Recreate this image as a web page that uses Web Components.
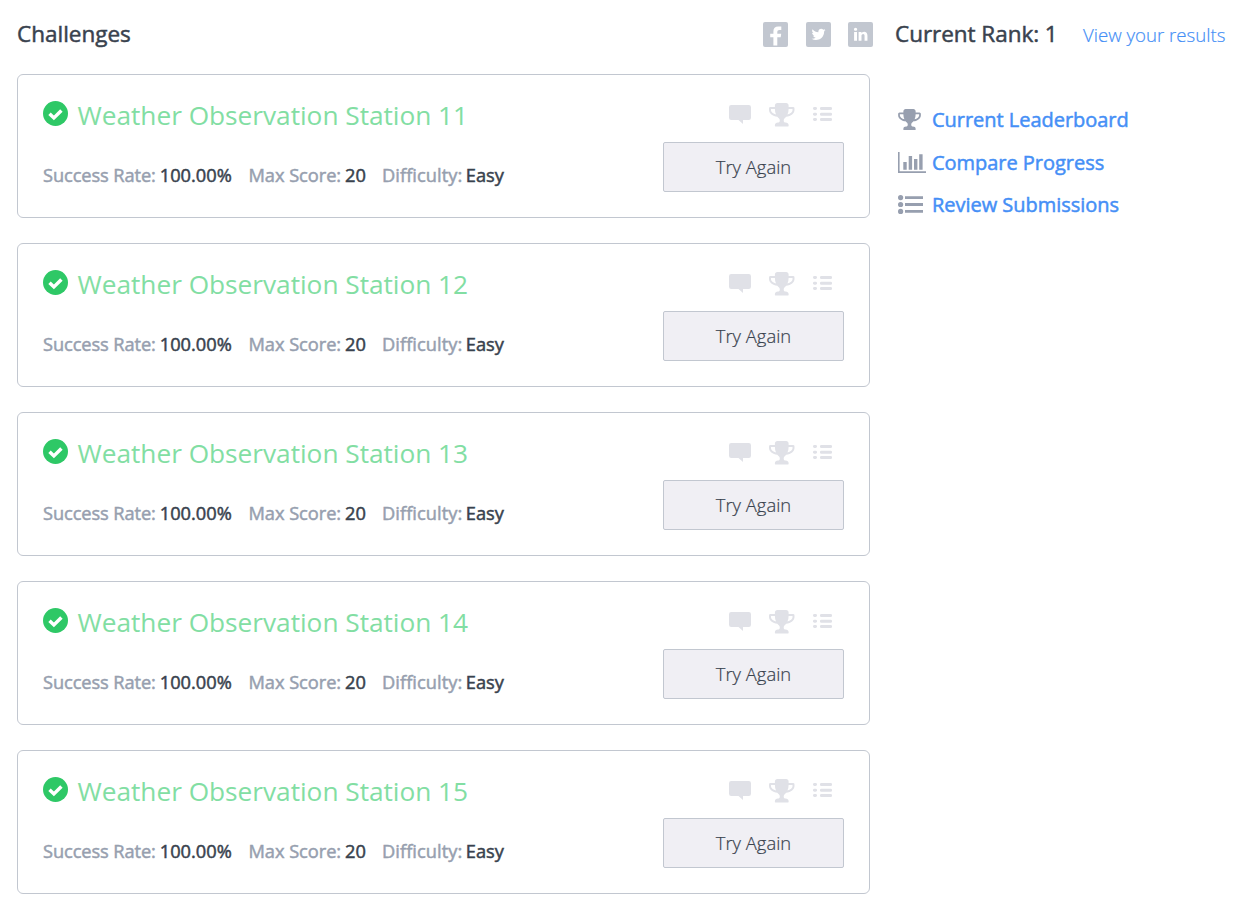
<!DOCTYPE html>
<html lang="en">
<head>
<meta charset="utf-8">
<title>Challenges</title>
<style>
html, body { margin: 0; background: #fff; }
body { font-family: "Open Sans", sans-serif; color: #39424e; }
</style>
</head>
<body>
<challenges-page></challenges-page>
<script>
const TROPHY = '<path d="M522 883q-74-162-74-371h-256v96q0 78 94.5 162t235.5 113zm1078-275v-96h-256q0 209-74 371 141-29 235.5-113t94.500-162zm128-128v128q0 71-41.500 143t-112 130-173 97.500-215.500 44.500q-42 54-95 95-38 34-52.500 72.500t-14.500 89.500q0 54 30.500 91t97.500 37q75 0 133.500 45.500t58.500 114.500v64q0 14-9 23t-23 9h-832q-14 0-23-9t-9-23v-64q0-69 58.500-114.500t133.500-45.500q67 0 97.500-37t30.500-91q0-51-14.500-89.500t-52.500-72.500q-53-41-95-95-113-5-215.500-44.500t-173-97.500-112-130-41.500-143v-128q0-40 28-68t68-28h288v-96q0-66 47-113t113-47h576q66 0 113 47t47 113v96h288q40 0 68 28t28 68z"/>';
const BIRD = '<path d="M1684 408q-67 98-162 167 1 14 1 42 0 130-38 259.500t-115.500 248.500-184.500 210.500-258 146-323 54.500q-271 0-496-145 35 4 78 4 225 0 401-138-105-2-188-64.500t-114-159.500q33 5 61 5 43 0 85-11-112-23-185.500-111.500t-73.500-205.500v-4q68 38 146 41-66-44-105-115t-39-154q0-88 44-163 121 149 294.500 238.500t371.500 99.500q-8-38-8-74 0-134 94.500-228.500t228.500-94.500q140 0 236 102 109-21 205-78-37 115-142 178 93-10 186-50z"/>';
const LINKED = '<path d="M477 625v991h-330v-991h330zm21-306q1 73-50.500 122t-135.500 49h-2q-82 0-132-49t-50-122q0-74 51.500-122.500t134.500-48.500 133 48.500 51 122.500zm1166 729v568h-329v-530q0-105-40.500-164.500t-126.500-59.500q-63 0-105.500 34.500t-63.500 85.500q-11 30-11 81v553h-329q2-399 2-647t-1-296l-1-48h329v144h-2q20-32 41-56t56.500-52 87-43.500 114.500-15.500q171 0 275 113.500t104 332.500z"/>';

const ICONS = {
  check: ['0 0 25 25', '<circle cx="12.5" cy="12.5" r="12.5"/><path d="M6.5 12.7l4.4 4.200 7.500-7.300" fill="none" stroke="#fff" stroke-width="3.500"/>'],
  comment: ['0 0 22 20', '<path d="M2.200 0h17.600q2.200 0 2.200 2.200v10.600q0 2.200-2.200 2.200h-5.800v4l-4.500-4h-7.300q-2.200 0-2.200-2.200v-10.600q0-2.200 2.200-2.200z"/>'],
  trophy: ['64 128 1664 1536', TROPHY],
  dotlist: ['0 0 19 14', '<rect width="4" height="3" rx="1.400"/><rect x="7" width="12" height="3" rx="1.300"/><rect y="5.700" width="4" height="3" rx="1.400"/><rect x="7" y="5.700" width="12" height="3" rx="1.300"/><rect y="11" width="4" height="3" rx="1.400"/><rect x="7" y="11" width="12" height="3" rx="1.300"/>'],
  chart: ['0 0 28 21', '<path d="M0 0h1.600v19.200h26.400v1.800h-28zM5.300 10h3.400v7.800h-3.400zM10.700 4h3.400v13.800h-3.400zM16 7h3.400v10.800h-3.400zM21.200 2.200h3.400v15.600h-3.400z"/>'],
  list: ['0 0 25 19', '<circle cx="2.600" cy="2.600" r="2.600"/><circle cx="2.600" cy="9.500" r="2.600"/><circle cx="2.600" cy="16.400" r="2.600"/><path d="M7 1.200h18v2.800h-18zM7 8.100h18v2.800h-18zM7 15h18v2.800h-18z"/>'],
  facebook: ['0 0 25 25', '<rect width="25" height="25" rx="2"/><path fill="#fff" d="M18.300 4.600v3.500h-2.100q-1.900 0-1.900 1.700v2h3.900l-.5 3.500h-3.400v8.300h-3.900v-8.300h-3.200v-3.500h3.200v-2.500q0-4.900 4.900-4.900z"/>'],
  twitter: ['0 0 25 25', '<rect width="25" height="25" rx="2"/><g fill="#fff" transform="translate(4.600 4.500) scale(.00885)">' + BIRD + '</g>'],
  linkedin: ['0 0 25 25', '<rect width="25" height="25" rx="2"/><g fill="#fff" transform="translate(4.800 4.500) scale(.0088)">' + LINKED + '</g>']
};

class UiIcon extends HTMLElement {
  connectedCallback() {
    const [box, body] = ICONS[this.getAttribute('name')];
    this.attachShadow({ mode: 'open' }).innerHTML =
      `<style>:host{display:block;flex:none}svg{display:block;width:100%;height:100%}</style>
       <svg viewBox="${box}" fill="currentColor" aria-hidden="true">${body}</svg>`;
  }
}

class StatItem extends HTMLElement {
  connectedCallback() {
    this.attachShadow({ mode: 'open' }).innerHTML = `
      <style>
        :host{display:flex;gap:4px;font-size:18.25px;line-height:26px;white-space:nowrap;-webkit-text-stroke:.5px}
        .label{color:#979faf;letter-spacing:var(--track,0)}
      </style>
      <span class="label"><slot name="label"></slot></span><span><slot></slot></span>`;
  }
}

class ChallengeCard extends HTMLElement {
  connectedCallback() {
    this.attachShadow({ mode: 'open' }).innerHTML = `
      <style>
        :host{display:flex;justify-content:space-between;box-sizing:border-box;height:144px;padding:0 25px;border:1px solid #c2c7d0;border-radius:6px;background:#fff}
        h2{display:flex;gap:9.5px;margin:21px 0 0;font-size:26.25px;font-weight:400;line-height:38px;letter-spacing:-.02px;color:#82dea3;white-space:nowrap}
        h2 ui-icon{width:25px;height:25px;margin-top:5px;color:#2ec866}
        .stats{display:flex;margin-top:28px}
        .right{width:181px}
        .icons{display:flex;align-items:flex-start;margin:28px 0 0 66px;height:39px;color:#e0e1e7}
        .comment{width:22px;height:20px;margin-top:2px}
        .trophy{width:25.500px;height:23.500px;margin-left:18px}
        .dots{width:19px;height:14px;margin:4px 0 0 18.500px}
        button{display:block;box-sizing:border-box;width:181px;height:50px;padding:0;border:1px solid #c2c7d0;border-radius:2px;background:#f0eff4;color:#39424e;font:300 18.400px/48px "Open Sans",sans-serif;-webkit-text-stroke:.2px}
      </style>
      <div>
        <h2><ui-icon name="check"></ui-icon><slot></slot></h2>
        <div class="stats">
          <stat-item style="--track:-.1px;width:205.500px"><span slot="label">Success Rate:</span>100.00%</stat-item>
          <stat-item style="--track:-.05px;width:133.500px"><span slot="label">Max Score:</span>20</stat-item>
          <stat-item style="--track:.05px;gap:3.500px"><span slot="label">Difficulty:</span>Easy</stat-item>
        </div>
      </div>
      <div class="right">
        <div class="icons"><ui-icon class="comment" name="comment"></ui-icon><ui-icon class="trophy" name="trophy"></ui-icon><ui-icon class="dots" name="dotlist"></ui-icon></div>
        <button>Try Again</button>
      </div>`;
  }
}

class SideLink extends HTMLElement {
  connectedCallback() {
    this.attachShadow({ mode: 'open' }).innerHTML = `
      <style>
        :host{display:flex;align-items:center;height:42.500px;color:#979faf}
        .box{width:34px;flex:none}
        ui-icon{width:var(--w);height:var(--h)}
        :host([icon=chart]) ui-icon{margin-top:1px}
        a{margin-top:2px;color:#458ff6;font-size:20px;line-height:28px;letter-spacing:-.03px;white-space:nowrap;-webkit-text-stroke:.5px}
      </style>
      <div class="box"><ui-icon name="${this.getAttribute('icon')}"></ui-icon></div><a><slot></slot></a>`;
  }
}

class ChallengesPage extends HTMLElement {
  connectedCallback() {
    const cards = [11, 12, 13, 14, 15].map(n => `<challenge-card>Weather Observation Station ${n}</challenge-card>`).join('');
    this.attachShadow({ mode: 'open' }).innerHTML = `
      <style>
        :host{display:grid;grid-template-columns:853px 340px;column-gap:25px;box-sizing:border-box;height:908px;padding-left:17px;overflow:hidden}
        header{display:flex;align-items:center;height:74px;box-sizing:border-box;padding-bottom:6px}
        h1{margin:0;font-size:22.500px;font-weight:400;line-height:32px;-webkit-text-stroke:.5px;white-space:nowrap}
        .social{display:flex;gap:17.500px;margin:0 -3px 0 auto;color:#c2c7d0}
        .social ui-icon{width:25px;height:25px}
        .cards{display:grid;gap:25px}
        .rank{width:163px;letter-spacing:-.04px}
        .results{margin:2px 0 0 25px;color:#458ff6;font-weight:300;font-size:18.650px;line-height:26px;white-space:nowrap;-webkit-text-stroke:.2px}
        nav{padding:24px 0 0 3px}
      </style>
      <main>
        <header><h1>Challenges</h1><div class="social"><ui-icon name="facebook"></ui-icon><ui-icon name="twitter"></ui-icon><ui-icon name="linkedin"></ui-icon></div></header>
        <div class="cards">${cards}</div>
      </main>
      <aside>
        <header><h1 class="rank">Current Rank: 1</h1><a class="results">View your results</a></header>
        <nav>
          <side-link icon="trophy" style="--w:23px;--h:21px">Current Leaderboard</side-link>
          <side-link icon="chart" style="--w:28px;--h:21px">Compare Progress</side-link>
          <side-link icon="list" style="--w:25px;--h:19px">Review Submissions</side-link>
        </nav>
      </aside>`;
  }
}

customElements.define('ui-icon', UiIcon);
customElements.define('stat-item', StatItem);
customElements.define('challenge-card', ChallengeCard);
customElements.define('side-link', SideLink);
customElements.define('challenges-page', ChallengesPage);
</script>
</body>
</html>
